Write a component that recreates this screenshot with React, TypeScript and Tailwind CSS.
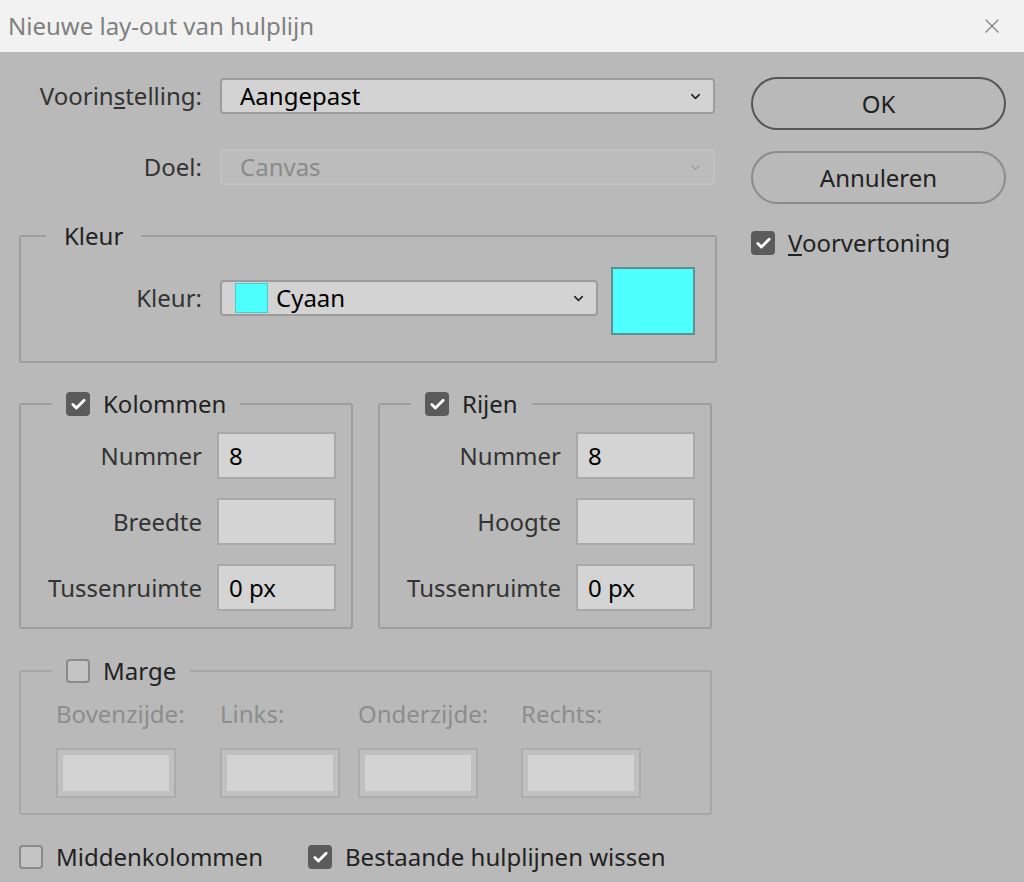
import React from 'react';
import { ChevronDown, X, Check } from 'lucide-react';

const font = { fontFamily: '"Noto Sans", "Open Sans", sans-serif' };

const CheckBox = ({ checked }: { checked: boolean }) =>
  checked ? (
    <div className="flex h-[24px] w-[24px] shrink-0 items-center justify-center rounded-[4px] bg-[#5b5b5b]">
      <Check size={17} strokeWidth={4} className="text-white" />
    </div>
  ) : (
    <div className="h-[24px] w-[24px] shrink-0 rounded-[4px] border-2 border-[#8a8a8a] bg-[#c4c4c4]" />
  );

const Field = ({ label, value }: { label: string; value?: string }) => (
  <div className="flex items-center">
    <span className="w-[196px] pr-[15px] text-right text-[24px] leading-[30px] text-[#333]">{label}</span>
    <div className="flex h-[47px] w-[119px] items-center border-2 border-[#a9a9a9] bg-[#d4d4d4] pl-[10px] text-[24px] text-black">
      {value}
    </div>
  </div>
);

const MargeInput = ({ label }: { label: string }) => (
  <div className="flex flex-col">
    <span className="h-[36px] text-[24px] leading-[36px] text-[#8d8d8d]">{label}</span>
    <div className="mt-[16px] h-[50px] w-[120px] border-2 border-[#acacac] bg-[#c0c0c0] p-[5px]">
      <div className="h-full w-full bg-[#d3d3d3]" />
    </div>
  </div>
);

export default function App() {
  return (
    <div className="h-[882px] w-[1024px] overflow-hidden bg-[#b9b9b9]" style={font}>
      {/* titel */}
      <div className="flex h-[52px] items-center justify-between bg-[#f2f2f2] pl-[8px] pr-[20px]">
        <span className="text-[24px] text-[#808080]">Nieuwe lay-out van hulplijn</span>
        <X size={24} strokeWidth={1.4} className="text-[#8a8a8a]" />
      </div>

      <div className="flex pl-[19px]">
        {/* linker kolom */}
        <div className="w-[698px]">
          <div className="mt-[26px] flex items-center">
            <span className="w-[183px] text-right text-[24px] leading-[30px] text-[#333]">
              Voorin<span className="underline underline-offset-2">s</span>telling:
            </span>
            <div className="ml-[18px] flex h-[36px] w-[495px] items-center justify-between rounded-[4px] border-2 border-[#9c9c9c] bg-[#d3d3d3] pl-[18px] pr-[10px] text-[24px] text-black">
              Aangepast
              <ChevronDown size={15} strokeWidth={2.5} className="text-[#222]" />
            </div>
          </div>

          <div className="mt-[35px] flex items-center">
            <span className="w-[183px] text-right text-[24px] leading-[30px] text-[#333]">Doel:</span>
            <div className="ml-[18px] flex h-[36px] w-[495px] items-center justify-between rounded-[4px] border-2 border-[#c2c2c2] bg-[#bcbcbc] pl-[18px] pr-[10px] text-[24px] text-[#8a8a8a]">
              Canvas
              <ChevronDown size={15} strokeWidth={2} className="text-[#9a9a9a]" />
            </div>
          </div>

          {/* Kleur */}
          <fieldset className="mt-[38px] h-[140px] rounded-[3px] border-2 border-[#9e9e9e]">
            <legend className="ml-[25px] px-[18px] text-[24px] leading-[26px] text-[#222]">Kleur</legend>
            <div className="mt-[15px] flex items-center">
              <span className="w-[181px] text-right text-[24px] leading-[30px] text-[#333]">Kleur:</span>
              <div className="ml-[18px] flex h-[36px] w-[378px] items-center rounded-[4px] border-2 border-[#9c9c9c] bg-[#d3d3d3] pl-[13px] pr-[10px] text-[24px] text-black">
                <div className="h-[30px] w-[33px] border border-[#4fc8c8] bg-[#4dffff]" />
                <span className="ml-[8px] flex-1">Cyaan</span>
                <ChevronDown size={15} strokeWidth={2.5} className="text-[#222]" />
              </div>
              <div className="ml-[13px] mt-[3px] -mb-[3px] h-[68px] w-[84px] border-2 border-[#5f8f8f] bg-[#4dffff]" />
            </div>
          </fieldset>

          {/* Kolommen / Rijen */}
          <div className="mt-[28px] flex gap-[25px]">
            <fieldset className="h-[238px] w-[334px] rounded-[3px] border-2 border-[#9e9e9e]">
              <legend className="ml-[31px] flex items-center gap-[13px] px-[14px] text-[24px] leading-[26px] text-[#222]">
                <CheckBox checked />
                Kolommen
              </legend>
              <div className="mt-[15px] flex flex-col gap-[19px]">
                <Field label="Nummer" value="8" />
                <Field label="Breedte" />
                <Field label="Tussenruimte" value="0 px" />
              </div>
            </fieldset>
            <fieldset className="h-[238px] w-[334px] rounded-[3px] border-2 border-[#9e9e9e]">
              <legend className="ml-[31px] flex items-center gap-[13px] px-[14px] text-[24px] leading-[26px] text-[#222]">
                <CheckBox checked />
                Rijen
              </legend>
              <div className="mt-[15px] flex flex-col gap-[19px]">
                <Field label="Nummer" value="8" />
                <Field label="Hoogte" />
                <Field label="Tussenruimte" value="0 px" />
              </div>
            </fieldset>
          </div>

          {/* Marge */}
          <fieldset className="mt-[29px] h-[157px] w-[693px] rounded-[3px] border-2 border-[#a6a6a6]">
            <legend className="ml-[31px] flex items-center gap-[13px] px-[14px] text-[24px] leading-[26px] text-[#222]">
              <CheckBox checked={false} />
              Marge
            </legend>
            <div className="ml-[35px] mt-[12px] flex">
              <div className="w-[164px]">
                <MargeInput label="Bovenzijde:" />
              </div>
              <div className="w-[138px]">
                <MargeInput label="Links:" />
              </div>
              <div className="w-[163px]">
                <MargeInput label="Onderzijde:" />
              </div>
              <MargeInput label="Rechts:" />
            </div>
          </fieldset>

          <div className="mt-[27px] flex items-center text-[24px] leading-[30px] text-[#222]">
            <CheckBox checked={false} />
            <span className="ml-[13px] w-[252px]">Middenkolommen</span>
            <CheckBox checked />
            <span className="ml-[13px]">Bestaande hulplijnen wissen</span>
          </div>
        </div>

        {/* rechter kolom */}
        <div className="ml-[34px] mt-[25px] flex w-[255px] flex-col">
          <button className="h-[53px] rounded-full border-2 border-[#555] text-[24px] text-[#222]">OK</button>
          <button className="mt-[21px] h-[53px] rounded-full border-2 border-[#8c8c8c] text-[24px] text-[#222]">
            Annuleren
          </button>
          <div className="mt-[24px] flex items-center text-[24px] leading-[30px] text-[#222]">
            <CheckBox checked />
            <span className="ml-[13px]">
              <span className="underline underline-offset-2">V</span>oorvertoning
            </span>
          </div>
        </div>
      </div>
    </div>
  );
}
